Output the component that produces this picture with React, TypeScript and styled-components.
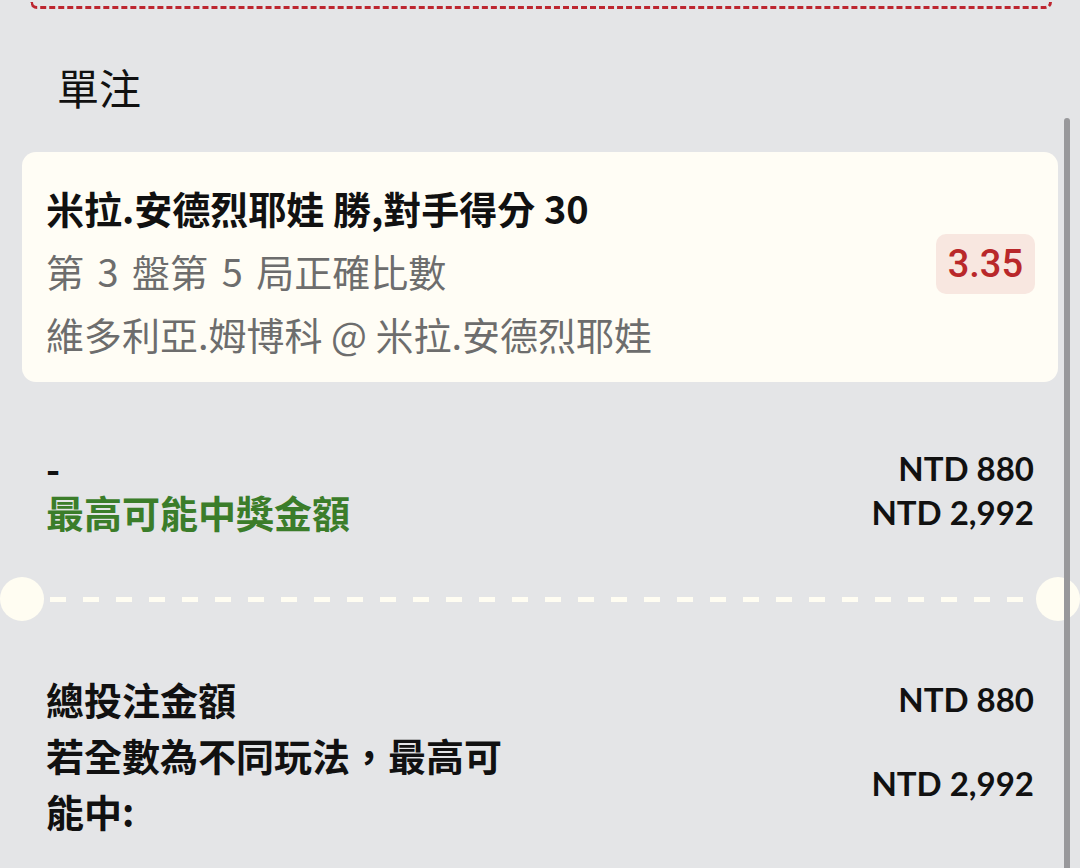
import { createGlobalStyle, styled } from 'styled-components';

const GlobalStyle = createGlobalStyle`
  html, body {
    margin: 0;
    padding: 0;
    background: #e4e5e7;
  }
  body {
    font-family: 'Noto Sans CJK TC', 'Noto Sans', sans-serif;
    color: #111;
  }
`;

interface SummaryRow {
  label: string;
  amount: string;
}

function App() {
  return (
    <>
      <GlobalStyle />
      <Screen>
        <Content>
          <PrevCardEdge />
          <SectionTitle>單注</SectionTitle>

          <BetCard>
            <BetInfo>
              <Selection>米拉.安德烈耶娃 勝,對手得分 30</Selection>
              <Market $spaced>第 3 盤第 5 局正確比數</Market>
              <Market>維多利亞.姆博科 @ 米拉.安德烈耶娃</Market>
            </BetInfo>
            <OddsBadge>3.35</OddsBadge>
          </BetCard>

          <StakeBlock>
            <StakeLabel>-</StakeLabel>
            <Amount>NTD 880</Amount>
            <StakeLabel $tone='green'>最高可能中獎金額</StakeLabel>
            <Amount>NTD 2,992</Amount>
          </StakeBlock>
        </Content>

        <TicketDivider>
          <Notch />
          <DashLine />
          <Notch />
        </TicketDivider>

        <Content>
          <TotalsBlock>
            {totals.map(row => (
              <TotalRow key={row.label}>
                <TotalLabel>{row.label}</TotalLabel>
                <Amount>{row.amount}</Amount>
              </TotalRow>
            ))}
          </TotalsBlock>
        </Content>

        <ScrollThumb />
      </Screen>
    </>
  );
}

const totals: SummaryRow[] = [
  { label: '總投注金額', amount: 'NTD 880' },
  { label: '若全數為不同玩法，最高可能中:', amount: 'NTD 2,992' },
];

const Screen = styled.div`
  position: relative;
  width: 1080px;
  height: 868px;
  overflow: hidden;
  background: #e4e5e7;
`;

const Content = styled.div`
  padding: 0 22px;
`;

// bottom edge of the card scrolled above
const PrevCardEdge = styled.div`
  height: 4px;
  margin: 2px 6px 0 8px;
  border: 3px dashed #bd2630;
  border-top: none;
  border-radius: 0 0 10px 10px;
`;

const SectionTitle = styled.h2`
  margin: 53px 0 40px;
  padding-left: 35px;
  font-size: 42px;
  font-weight: 400;
  line-height: 50px;
  color: #111;
`;

const BetCard = styled.div`
  display: flex;
  align-items: center;
  justify-content: space-between;
  padding: 24px 23px 17px 24px;
  border-radius: 14px;
  background: #fffdf5;
`;

const BetInfo = styled.div`
  display: flex;
  flex-direction: column;
`;

const Selection = styled.div`
  font-size: 38px;
  font-weight: 700;
  line-height: 63px;
  color: #111;
  white-space: nowrap;
`;

const Market = styled.div<{ $spaced?: boolean }>`
  font-size: 38px;
  font-weight: 400;
  line-height: 63px;
  color: #6d6d6d;
  white-space: nowrap;
  word-spacing: ${p => (p.$spaced ? '5px' : 'normal')};
`;

const OddsBadge = styled.div`
  margin-bottom: 14px;
  padding: 8px 12px;
  border-radius: 10px;
  background: #f8e7e0;
  color: #b9282a;
  font-family: Roboto, 'Noto Sans', sans-serif;
  font-size: 38px;
  font-weight: 500;
  line-height: 44px;
`;

const StakeBlock = styled.div`
  display: grid;
  grid-template-columns: 1fr auto;
  margin-top: 64px;
  padding: 0 24px;
  line-height: 44px;
`;

const StakeLabel = styled.div<{ $tone?: 'green' }>`
  font-size: 38px;
  font-weight: 700;
  line-height: 44px;
  color: ${p => (p.$tone === 'green' ? '#3b7d2a' : '#111')};
`;

const Amount = styled.div`
  justify-self: end;
  font-family: Lato, 'Noto Sans', sans-serif;
  font-size: 33px;
  font-weight: 700;
  color: #111;
  white-space: nowrap;
`;

const TicketDivider = styled.div`
  display: flex;
  align-items: center;
  margin-top: 43px;
  height: 44px;
`;

const Notch = styled.div`
  flex: 0 0 44px;
  height: 44px;
  border-radius: 50%;
  background: #fffdf2;
`;

const DashLine = styled.div`
  flex: 1;
  height: 5px;
  margin: 0 5px 0 6px;
  background: repeating-linear-gradient(to right, #fffdf2 0 16px, transparent 16px 33px);
`;

const TotalsBlock = styled.div`
  display: flex;
  flex-direction: column;
  margin-top: 50px;
  padding: 0 24px;
`;

const TotalRow = styled.div`
  display: flex;
  align-items: center;
  justify-content: space-between;
`;

const TotalLabel = styled.div`
  width: 470px;
  font-size: 38px;
  font-weight: 700;
  line-height: 56px;
  color: #111;
`;

const ScrollThumb = styled.div`
  position: absolute;
  top: 118px;
  bottom: 0;
  right: 10px;
  width: 6px;
  border-radius: 3px 3px 0 0;
  background: #98989b;
`;

export default App;
